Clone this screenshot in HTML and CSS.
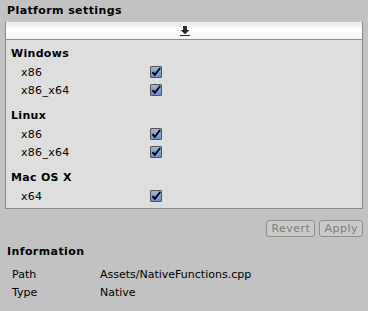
FILE: index.html
```html
<!DOCTYPE html>
<html>
<head>
<meta charset="utf-8">
<link rel="stylesheet" href="styles.css">
</head>
<body>
<div class="panel">
  <div class="title">Platform settings</div>
  <div class="box">
    <div class="box-head">
      <svg class="arrow" width="10" height="10" viewBox="0 0 10 10"><path d="M3 0h4v4h2.5L5 8.2 0.5 4H3z" fill="#2a2a2a"/><rect x="0" y="9" width="10" height="1" fill="#2a2a2a"/></svg>
    </div>
    <div class="box-body">
      <div class="group">Windows</div>
      <div class="row"><span class="lbl">x86</span><span class="cb"><svg viewBox="0 0 12 12" width="12" height="12"><path d="M2.5 6.2 L4.8 8.8 L10.2 2" fill="none" stroke="#000" stroke-width="2"/></svg></span></div>
      <div class="row"><span class="lbl">x86_x64</span><span class="cb"><svg viewBox="0 0 12 12" width="12" height="12"><path d="M2.5 6.2 L4.8 8.8 L10.2 2" fill="none" stroke="#000" stroke-width="2"/></svg></span></div>
      <div class="group">Linux</div>
      <div class="row"><span class="lbl">x86</span><span class="cb"><svg viewBox="0 0 12 12" width="12" height="12"><path d="M2.5 6.2 L4.8 8.8 L10.2 2" fill="none" stroke="#000" stroke-width="2"/></svg></span></div>
      <div class="row"><span class="lbl">x86_x64</span><span class="cb"><svg viewBox="0 0 12 12" width="12" height="12"><path d="M2.5 6.2 L4.8 8.8 L10.2 2" fill="none" stroke="#000" stroke-width="2"/></svg></span></div>
      <div class="group">Mac OS X</div>
      <div class="row"><span class="lbl">x64</span><span class="cb"><svg viewBox="0 0 12 12" width="12" height="12"><path d="M2.5 6.2 L4.8 8.8 L10.2 2" fill="none" stroke="#000" stroke-width="2"/></svg></span></div>
    </div>
  </div>
  <div class="buttons">
    <button class="btn">Revert</button>
    <button class="btn">Apply</button>
  </div>
  <div class="title info">Information</div>
  <div class="inforow"><span class="ilbl">Path</span><span>Assets/NativeFunctions.cpp</span></div>
  <div class="inforow"><span class="ilbl">Type</span><span>Native</span></div>
</div>
</body>
</html>
```
FILE: styles.css
```css
html, body {
  margin: 0;
  padding: 0;
  background: #c2c2c2;
  width: 368px;
  height: 311px;
  overflow: hidden;
}
.panel {
  font-family: "DejaVu Sans", sans-serif;
  font-size: 11px;
  color: #000;
  padding: 3px 5px 0 5px;
  display: flex;
  flex-direction: column;
}
.title {
  font-weight: bold;
  font-size: 11px;
  height: 16px;
  line-height: 16px;
  padding-left: 2px;
  letter-spacing: 0.4px;
}
.box {
  margin-top: 3px;
  width: 356px;
  border: 1px solid #8a8a8a;
  border-top: 0;
}
.box-head {
  height: 16px;
  background: linear-gradient(#e9e9e9, #ffffff 40%, #f3f3f3);
  border-top: 1px solid #f0f0f0;
  border-bottom: 1px solid #8e8e8e;
  display: flex;
  justify-content: center;
  align-items: center;
}
.arrow { display: block; margin-left: 2px; }
.box-body {
  background: #dedede;
  padding: 3px 0 3px 0;
}
.group {
  font-weight: bold;
  height: 18px;
  line-height: 18px;
  padding-left: 5px;
  margin-top: 2px;
  letter-spacing: 0.3px;
}
.row {
  display: flex;
  align-items: center;
  height: 18px;
  padding-left: 15px;
}
.row + .group { margin-top: 8px; }
.lbl {
  width: 129px;
  letter-spacing: 0.3px;
}
.cb {
  width: 10px;
  height: 10px;
  border: 1px solid #555;
  border-radius: 1px;
  background: linear-gradient(#9bb5dd, #6f8fc4);
  position: relative;
}
.cb svg {
  position: absolute;
  left: -1px;
  top: -1px;
}
.buttons {
  display: flex;
  justify-content: flex-end;
  gap: 4px;
  margin-top: 11px;
  width: 358px;
}
.btn {
  font-family: "DejaVu Sans", sans-serif;
  font-size: 11px;
  color: #7e7e7e;
  height: 17px;
  padding: 0 4px;
  border: 1px solid #8f8f8f;
  border-radius: 3px;
  background: #cacaca;
  letter-spacing: 0.5px;
  line-height: 14px;
}
.info {
  margin-top: 6px;
  height: 18px;
  line-height: 18px;
  margin-bottom: 5px;
}
.inforow {
  display: flex;
  height: 18px;
  line-height: 18px;
  padding-left: 7px;
}
.ilbl { width: 88px; }
```
